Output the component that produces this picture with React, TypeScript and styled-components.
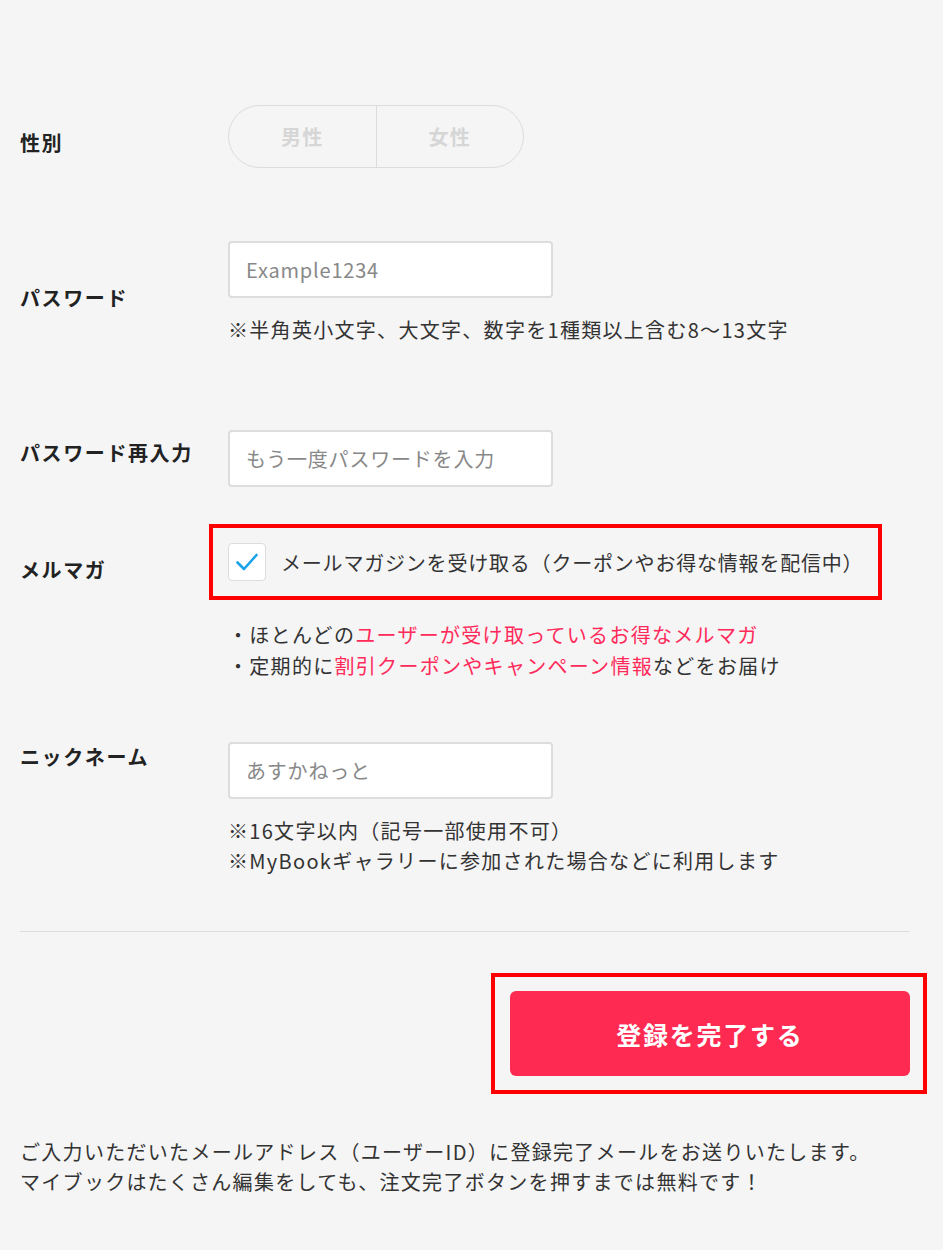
import React, { useState } from "react";
import styled, { createGlobalStyle } from "styled-components";

const GlobalStyle = createGlobalStyle`
  html, body {
    margin: 0;
    padding: 0;
    background: #f5f5f5;
  }
  body {
    font-family: "Noto Sans CJK JP", "Noto Sans", sans-serif;
    color: #333;
  }
`;

const Page = styled.div`
  width: 943px;
  box-sizing: border-box;
  padding: 105px 33px 60px 20px;
  font-size: 20px;
  letter-spacing: 0.065em;
`;

const Row = styled.div<{ $align?: string; $top?: number }>`
  display: flex;
  align-items: ${(p) => p.$align || "center"};
  margin-top: ${(p) => p.$top ?? 0}px;
`;

const Label = styled.div<{ $shift?: number }>`
  width: 208px;
  flex-shrink: 0;
  font-weight: bold;
  color: #222;
  line-height: 30px;
  letter-spacing: 0.08em;
  position: relative;
  top: ${(p) => p.$shift ?? 0}px;
`;

const Field = styled.div`
  display: flex;
  flex-direction: column;
  align-items: flex-start;
`;

const Toggle = styled.div`
  display: flex;
  width: 296px;
  height: 63px;
  box-sizing: border-box;
  border: 1.5px solid #dcdcdc;
  border-radius: 32px;
  overflow: hidden;
`;

const ToggleOption = styled.button`
  flex: 1;
  border: none;
  background: transparent;
  font: inherit;
  font-weight: bold;
  font-size: 20px;
  color: #d6d6d6;
  letter-spacing: 0.06em;
  cursor: pointer;
  & + & {
    border-left: 1.5px solid #dcdcdc;
  }
`;

const TextInput = styled.input`
  width: 325px;
  height: 57px;
  box-sizing: border-box;
  border: 2px solid #dddddd;
  border-radius: 4px;
  background: #fff;
  padding: 0 16px;
  font: inherit;
  font-size: 20px;
  letter-spacing: 0.04em;
  color: #333;
  outline: none;
  &::placeholder {
    color: #888;
  }
`;

const Hint = styled.p<{ $top?: number }>`
  margin: ${(p) => p.$top ?? 0}px 0 0;
  line-height: 30px;
  color: #333;
`;

const Accent = styled.span`
  color: #ff2a5a;
`;

const CheckRow = styled.label`
  display: flex;
  align-items: center;
  gap: 15px;
  outline: 4px solid #ff0000;
  outline-offset: 15px;
  letter-spacing: 0.04em;
  cursor: pointer;
  white-space: nowrap;
`;

const CheckBox = styled.span`
  width: 38px;
  height: 38px;
  box-sizing: border-box;
  border: 1.5px solid #dcdcdc;
  border-radius: 4px;
  background: #fff;
  display: flex;
  align-items: center;
  justify-content: center;
  flex-shrink: 0;
`;

const HiddenCheck = styled.input`
  display: none;
`;

const Bullets = styled.div`
  margin-top: 38px;
  line-height: 31px;
`;

const Divider = styled.hr`
  margin: 55px 0 0;
  border: none;
  border-top: 1.5px solid #dcdcdc;
`;

const Actions = styled.div`
  display: flex;
  justify-content: flex-end;
  margin-top: 41px;
`;

const Highlight = styled.div`
  border: 4px solid #ff0000;
  padding: 14px 13px 14px 15px;
  margin-right: -17px;
`;

const SubmitButton = styled.button`
  display: block;
  width: 400px;
  height: 85px;
  border: none;
  border-radius: 6px;
  background: #ff2a52;
  color: #fff;
  font: inherit;
  font-size: 25px;
  font-weight: bold;
  letter-spacing: 0.07em;
  cursor: pointer;
`;

const Footer = styled.p`
  margin: 43px 0 0;
  line-height: 30px;
  color: #333;
`;

const App = () => {
  const [gender, setGender] = useState<string | null>(null);
  const [magazine, setMagazine] = useState(true);

  return (
    <>
      <GlobalStyle />
      <Page>
        <Row>
          <Label $shift={6}>性別</Label>
          <Toggle>
            {["男性", "女性"].map((g) => (
              <ToggleOption
                key={g}
                onClick={() => setGender(g)}
                style={gender === g ? { color: "#333" } : undefined}
              >
                {g}
              </ToggleOption>
            ))}
          </Toggle>
        </Row>

        <Row $top={73}>
          <Label $shift={5}>パスワード</Label>
          <Field>
            <TextInput type="text" placeholder="Example1234" />
            <Hint $top={17}>※半角英小文字、大文字、数字を1種類以上含む8〜13文字</Hint>
          </Field>
        </Row>

        <Row $top={85}>
          <Label $shift={-6}>パスワード再入力</Label>
          <TextInput type="password" placeholder="もう一度パスワードを入力" />
        </Row>

        <Row $top={56} $align="flex-start">
          <Label $shift={12}>メルマガ</Label>
          <Field>
            <CheckRow>
              <HiddenCheck
                type="checkbox"
                checked={magazine}
                onChange={(e) => setMagazine(e.target.checked)}
              />
              <CheckBox>
                {magazine && (
                  <svg width="24" height="20" viewBox="0 0 24 20" fill="none">
                    <path
                      d="M2.5 10.5 L9 17 L21.5 3"
                      stroke="#1aa3e8"
                      strokeWidth="2.6"
                      strokeLinecap="round"
                      strokeLinejoin="round"
                    />
                  </svg>
                )}
              </CheckBox>
              メールマガジンを受け取る（クーポンやお得な情報を配信中）
            </CheckRow>
            <Bullets>
              ・ほとんどの<Accent>ユーザーが受け取っているお得なメルマガ</Accent>
              <br />
              ・定期的に<Accent>割引クーポンやキャンペーン情報</Accent>などをお届け
            </Bullets>
          </Field>
        </Row>

        <Row $top={61} $align="flex-start">
          <Label>ニックネーム</Label>
          <Field>
            <TextInput type="text" placeholder="あすかねっと" />
            <Hint $top={17}>
              ※16文字以内（記号一部使用不可）
              <br />
              ※MyBookギャラリーに参加された場合などに利用します
            </Hint>
          </Field>
        </Row>

        <Divider />

        <Actions>
          <Highlight>
            <SubmitButton>登録を完了する</SubmitButton>
          </Highlight>
        </Actions>

        <Footer>
          ご入力いただいたメールアドレス（ユーザーID）に登録完了メールをお送りいたします。
          <br />
          マイブックはたくさん編集をしても、注文完了ボタンを押すまでは無料です！
        </Footer>
      </Page>
    </>
  );
};

export default App;
